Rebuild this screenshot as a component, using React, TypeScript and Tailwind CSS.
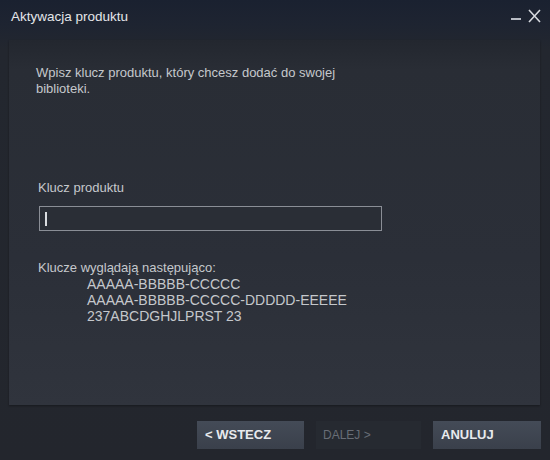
import React from 'react';

const font = { fontFamily: '"Liberation Sans", Arial, sans-serif' };

export default function App() {
  return (
    <div
      style={font}
      className="flex h-[460px] w-[550px] flex-col bg-[linear-gradient(to_bottom,#1a2130_0px,#1e2431_25px,#23272f_50px,#23262d_100%)] text-[13px] text-[#c5c8cc]"
    >
      {/* title bar */}
      <div className="flex h-[40px] items-start justify-between">
        <span className="pl-[11px] pt-[9px] text-[13.5px] leading-[16px] text-[#e4e6e9]">Aktywacja produktu</span>
        <div className="flex items-center gap-[7px] pr-[9px] pt-[9px]">
          <svg width="10" height="14" viewBox="0 0 10 14">
            <rect x="0" y="9" width="10" height="2" fill="#b8bcc4" />
          </svg>
          <svg width="13" height="14" viewBox="0 0 13 14">
            <path d="M1 1 L12 13 M12 1 L1 13" stroke="#d6d9de" strokeWidth="1.6" />
          </svg>
        </div>
      </div>

      {/* content panel */}
      <div className="ml-[9px] mr-[10px] h-[365px] bg-[linear-gradient(to_bottom,#23272f_0px,#292d35_30px,#2b2f38_60%,#30343d)] pl-[27px] shadow-[0_1px_2px_rgba(0,0,0,0.35)]">
        <p className="mt-[25px] w-[330px] leading-[16px]">
          Wpisz klucz produktu, który chcesz dodać do swojej biblioteki.
        </p>
        <p className="ml-[2px] mt-[83px] leading-[16px]">Klucz produktu</p>
        <div className="ml-[3px] mt-[10px] flex h-[25px] w-[343px] items-center border border-[#8a8e96] bg-[#2a2e36] pl-[5px]">
          <div className="h-[14px] w-[2px] bg-[#d9dce0]" />
        </div>
        <div className="ml-[2px] mt-[29px] leading-[16px]">
          <p>Klucze wyglądają następująco:</p>
          <div className="pl-[49px] text-[14px]">
            <p>AAAAA-BBBBB-CCCCC</p>
            <p>AAAAA-BBBBB-CCCCC-DDDDD-EEEEE</p>
            <p>237ABCDGHJLPRST 23</p>
          </div>
        </div>
      </div>

      {/* footer buttons */}
      <div className="flex justify-end gap-[12px] pr-[9px] pt-[16px]">
        <button className="flex h-[28px] w-[107px] items-center bg-[linear-gradient(to_bottom,#444b57,#3a404b)] pl-[8px] text-[13px] font-bold text-[#e8eaed]">
          &lt; WSTECZ
        </button>
        <button className="flex h-[28px] w-[105px] items-center bg-[#262a31] pl-[7px] text-[12px] text-[#686d76]" disabled>
          DALEJ &gt;
        </button>
        <button className="flex h-[28px] w-[108px] items-center bg-[linear-gradient(to_bottom,#444b57,#3a404b)] pl-[8px] text-[13px] font-bold text-[#e8eaed]">
          ANULUJ
        </button>
      </div>
    </div>
  );
}
